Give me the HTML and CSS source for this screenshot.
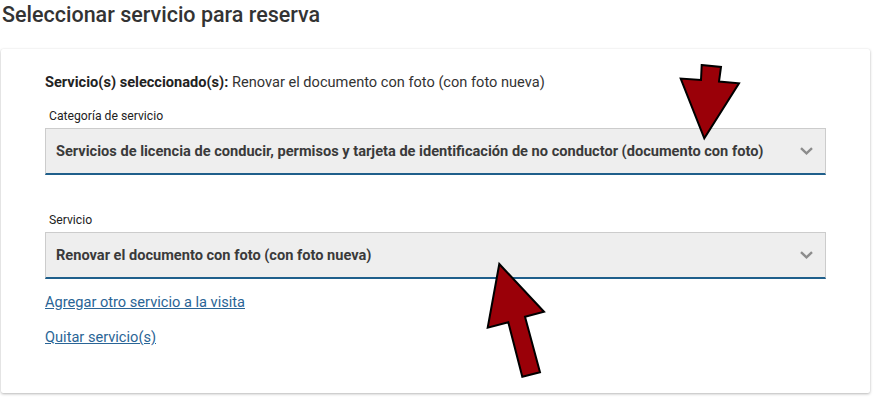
FILE: index.html
```html
<!DOCTYPE html>
<html lang="es">
<head>
<meta charset="utf-8">
<title>Seleccionar servicio para reserva</title>
<link rel="stylesheet" href="styles.css">
</head>
<body>
<main class="page">
  <h1 class="title">Seleccionar servicio para reserva</h1>
  <section class="card">
    <p class="summary"><strong>Servicio(s) seleccionado(s):</strong> Renovar el documento con foto (con foto nueva)</p>
    <div class="field">
      <label class="field-label">Categoría de servicio</label>
      <div class="select">
        <span class="select-value">Servicios de licencia de conducir, permisos y tarjeta de identificación de no conductor (documento con foto)</span>
        <svg class="chev" width="13" height="8" viewBox="0 0 13 8"><path d="M1 1.2 L6.5 6.3 L12 1.2" fill="none" stroke="#8c8c8c" stroke-width="2.4"/></svg>
      </div>
    </div>
    <div class="field field-second">
      <label class="field-label">Servicio</label>
      <div class="select">
        <span class="select-value">Renovar el documento con foto (con foto nueva)</span>
        <svg class="chev" width="13" height="8" viewBox="0 0 13 8"><path d="M1 1.2 L6.5 6.3 L12 1.2" fill="none" stroke="#8c8c8c" stroke-width="2.4"/></svg>
      </div>
    </div>
    <div class="links">
      <a class="link" href="#">Agregar otro servicio a la visita</a>
      <a class="link" href="#">Quitar servicio(s)</a>
    </div>
  </section>
</main>
<svg class="arrows" width="874" height="398" viewBox="0 0 874 398">
  <polygon points="701.7,65 721,67 719,81.5 739,83.3 704.3,138.3 680.7,78.5 701,80" fill="#9a0008" stroke="#000" stroke-width="2" stroke-linejoin="miter"/>
  <polygon points="499.3,264 544,311.7 525,316.7 540,372.3 522.3,376.7 508.3,322.3 487.7,327.7" fill="#9a0008" stroke="#000" stroke-width="2" stroke-linejoin="miter"/>
</svg>
</body>
</html>
```
FILE: styles.css
```css
html, body {
  margin: 0;
  padding: 0;
  background: #ffffff;
}
body {
  font-family: Roboto, "Liberation Sans", Arial, sans-serif;
  color: #333333;
  width: 874px;
  height: 398px;
  overflow: hidden;
  position: relative;
}
.page {
  padding: 0 4px 0 1px;
}
.title {
  margin: 0;
  padding: 2px 0 0 1px;
  height: 49px;
  box-sizing: border-box;
  font-size: 21.5px;
  font-weight: 500;
  line-height: 26px;
  color: #333333;
}
.card {
  width: 869px;
  height: 344px;
  box-sizing: border-box;
  background: #fff;
  border-radius: 2px;
  box-shadow: 0 1px 3px rgba(0,0,0,0.28), 0 0 1px rgba(0,0,0,0.08);
  padding: 23px 44px 0 44px;
  display: flex;
  flex-direction: column;
}
.summary {
  margin: 0;
  font-size: 14.6px;
  line-height: 21px;
  color: #333;
}
.summary strong {
  font-weight: 700;
  color: #222;
}
.field {
  display: flex;
  flex-direction: column;
  margin-top: 16px;
}
.field-second {
  margin-top: 38px;
}
.field-label {
  font-size: 12.2px;
  line-height: 15px;
  padding-left: 4px;
  margin-bottom: 4px;
  color: #222;
}
.select {
  height: 47px;
  box-sizing: border-box;
  background: #eeeeee;
  border: 1px solid #cccccc;
  border-bottom: 2px solid #1f5f8b;
  display: flex;
  align-items: center;
  justify-content: space-between;
  padding: 0 12px 0 10px;
}
.select-value {
  font-size: 14.6px;
  font-weight: 700;
  color: #3a3a3a;
}
.chev {
  display: block;
}
.links {
  display: flex;
  flex-direction: column;
  align-items: flex-start;
  gap: 14px;
  margin-top: 13px;
}
.link {
  font-size: 14.6px;
  line-height: 21px;
  color: #2a6596;
  text-decoration: underline;
}
.arrows {
  position: absolute;
  left: 0;
  top: 0;
  pointer-events: none;
}
```
